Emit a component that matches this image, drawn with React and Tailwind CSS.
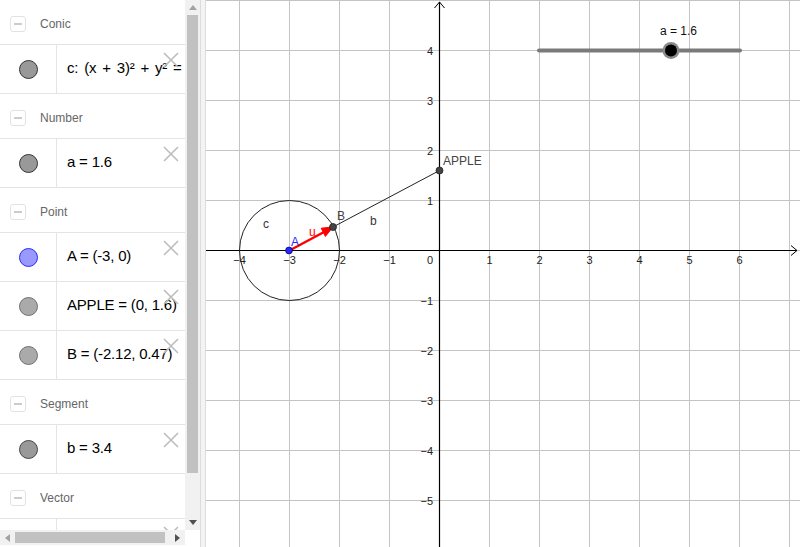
import React from "react";

const groups = [
  {
    title: "Conic",
    items: [{ text: "c: (x + 3)² + y² = 1", dot: "bg-[#999999] border-[#333333]", wide: true }],
  },
  {
    title: "Number",
    items: [{ text: "a = 1.6", dot: "bg-[#999999] border-[#333333]" }],
  },
  {
    title: "Point",
    items: [
      { text: "A = (-3, 0)", dot: "bg-[#9999ff] border-[#2a2aff]" },
      { text: "APPLE = (0, 1.6)", dot: "bg-[#aaaaaa] border-[#707070]" },
      { text: "B = (-2.12, 0.47)", dot: "bg-[#aaaaaa] border-[#707070]" },
    ],
  },
  {
    title: "Segment",
    items: [{ text: "b = 3.4", dot: "bg-[#999999] border-[#444444]" }],
  },
  {
    title: "Vector",
    items: [{ text: "", dot: "bg-[#ff7777] border-[#ff0000]" }],
  },
];

const CloseIcon = () => (
  <svg width="16" height="16" viewBox="0 0 16 16" className="absolute left-[163px] top-[7px]">
    <path d="M1 1 L15 15 M15 1 L1 15" stroke="#bdbdbd" strokeWidth="1.6" fill="none" />
  </svg>
);

const Header = ({ title }) => (
  <div className="flex h-[45px] items-center border-b border-[#e4e4e4] pt-[4px]">
    <div className="ml-[10px] flex h-[16px] w-[16px] items-center justify-center rounded-[3px] border border-[#e2e2e2]">
      <div className="h-[2px] w-[8px] bg-[#cccccc]" />
    </div>
    <span className="ml-[14px] text-[12px] text-[#666666]">{title}</span>
  </div>
);

const Item = ({ text, dot, wide }) => (
  <div className="relative flex h-[49px] border-b border-[#e4e4e4]">
    <div className="flex w-[57px] shrink-0 items-center justify-center border-r border-[#e4e4e4]">
      <div className={`h-[19px] w-[19px] rounded-full border ${dot}`} />
    </div>
    <div
      className={`flex items-center whitespace-nowrap pb-[2px] pl-[10px] text-[15px] tracking-[-0.2px] text-black ${
        wide ? "[word-spacing:2px]" : ""
      }`}
    >
      {text}
    </div>
    <CloseIcon />
  </div>
);

const xs = [-4, -3, -2, -1, 1, 2, 3, 4, 5, 6];
const ys = [4, 3, 2, 1, -1, -2, -3, -4, -5];
const ox = 439.5;
const oy = 250.5;
const label = (n) => (n < 0 ? "\u2212" + Math.abs(n) : String(n));

const Graphics = () => {
  const vLines = [];
  for (let k = -4; k <= 7; k++) vLines.push(ox + k * 50);
  const hLines = [];
  for (let k = -5; k <= 5; k++) hLines.push(oy + k * 50);

  return (
    <svg width="594" height="547" viewBox="206 0 594 547" className="block shrink-0 bg-white">
      {vLines.map((x) => (
        <line key={"v" + x} x1={x} y1="0" x2={x} y2="547" stroke="#c4c4c4" strokeWidth="1" />
      ))}
      {hLines.map((y) => (
        <line key={"h" + y} x1="206" y1={y} x2="800" y2={y} stroke="#c4c4c4" strokeWidth="1" />
      ))}

      {/* axes */}
      <line x1="206" y1={oy} x2="797" y2={oy} stroke="#000" strokeWidth="1.2" />
      <path d="M791 245.5 L797 250.5 L791 255.5" stroke="#000" fill="none" strokeWidth="1" />
      <line x1={ox} y1="547" x2={ox} y2="2" stroke="#000" strokeWidth="1.2" />
      <path d="M434.5 8 L439.5 2 L444.5 8" stroke="#000" fill="none" strokeWidth="1" />

      <g fontFamily="'Liberation Sans', Arial, sans-serif" fontSize="11" fill="#222">
        {xs.map((n) => (
          <text key={"xl" + n} x={ox + n * 50} y="264" textAnchor="middle">
            {label(n)}
          </text>
        ))}
        <text x="430" y="264" textAnchor="middle">0</text>
        {ys.map((n) => (
          <text key={"yl" + n} x="433" y={oy - n * 50 + 4} textAnchor="end">
            {label(n)}
          </text>
        ))}
      </g>

      {/* circle c */}
      <circle cx="289.5" cy={oy} r="50" fill="none" stroke="#222" strokeWidth="1" />

      {/* segment b */}
      <line x1="333" y1="227" x2={ox} y2="170.5" stroke="#222" strokeWidth="1" />

      {/* vector u */}
      <line x1="289.5" y1={oy} x2="324" y2="232" stroke="#ff0000" strokeWidth="2.5" />
      <polygon points="333,227 325.4,236.4 321.2,228.2" fill="#ff0000" stroke="#ff0000" strokeWidth="1" />

      {/* points */}
      <circle cx="289" cy={oy} r="3.4" fill="#2626ff" stroke="#000080" strokeWidth="0.8" />
      <circle cx="333" cy="227" r="3.5" fill="#444" stroke="#222" strokeWidth="0.8" />
      <circle cx={ox} cy="170.5" r="3.5" fill="#444" stroke="#222" strokeWidth="0.8" />

      <g fontFamily="'Liberation Sans', Arial, sans-serif" fontSize="12">
        <text x="263" y="228" fill="#333">c</text>
        <text x="291" y="246" fill="#2626ff">A</text>
        <text x="309" y="236" fill="#ff0000">u</text>
        <text x="337" y="220" fill="#444">B</text>
        <text x="370" y="225" fill="#333">b</text>
        <text x="443" y="165" fill="#444">APPLE</text>
        <text x="660" y="35" fill="#111">a = 1.6</text>
      </g>

      {/* slider */}
      <line x1="539" y1="50.5" x2="740" y2="50.5" stroke="#7a7a7a" strokeWidth="4" strokeLinecap="round" />
      <circle cx="671" cy="50.5" r="8.5" fill="#8a8a8a" />
      <circle cx="671" cy="50.5" r="6" fill="#000" />
    </svg>
  );
};

const App = () => {
  return (
    <div className="flex h-[547px] w-[800px] overflow-hidden bg-white font-['Liberation_Sans',Arial,sans-serif]">
      <div className="flex w-[200px] shrink-0 flex-col">
        <div className="flex h-[530px]">
          <div className="w-[185px] overflow-hidden">
            {groups.map((g) => (
              <div key={g.title}>
                <Header title={g.title} />
                {g.items.map((it, i) => (
                  <Item key={g.title + i} {...it} />
                ))}
              </div>
            ))}
          </div>
          <div className="flex w-[15px] flex-col items-center bg-[#f1f1f1]">
            <div className="flex h-[15px] items-center justify-center">
              <svg width="8" height="5" viewBox="0 0 8 5">
                <path d="M0 5 L4 0 L8 5 Z" fill="#a3a3a3" />
              </svg>
            </div>
            <div className="h-[458px] w-[11px] bg-[#c1c1c1]" />
            <div className="flex-1" />
            <div className="flex h-[15px] items-center justify-center">
              <svg width="8" height="5" viewBox="0 0 8 5">
                <path d="M0 0 L8 0 L4 5 Z" fill="#505050" />
              </svg>
            </div>
          </div>
        </div>
        <div className="flex h-[17px]">
          <div className="flex h-[15px] w-[185px] items-center bg-[#f1f1f1]">
            <div className="flex w-[15px] items-center justify-center">
              <svg width="5" height="8" viewBox="0 0 5 8">
                <path d="M5 0 L0 4 L5 8 Z" fill="#a3a3a3" />
              </svg>
            </div>
            <div className="h-[11px] w-[150px] bg-[#c1c1c1]" />
            <div className="flex-1" />
            <div className="flex w-[15px] items-center justify-center">
              <svg width="5" height="8" viewBox="0 0 5 8">
                <path d="M0 0 L5 4 L0 8 Z" fill="#505050" />
              </svg>
            </div>
          </div>
          <div className="w-[15px] bg-white" />
        </div>
      </div>
      <div className="w-[6px] shrink-0 border-l border-r border-[#dcdcdc] bg-[#f4f4f4]" />
      <Graphics />
    </div>
  );
};

export default App;
